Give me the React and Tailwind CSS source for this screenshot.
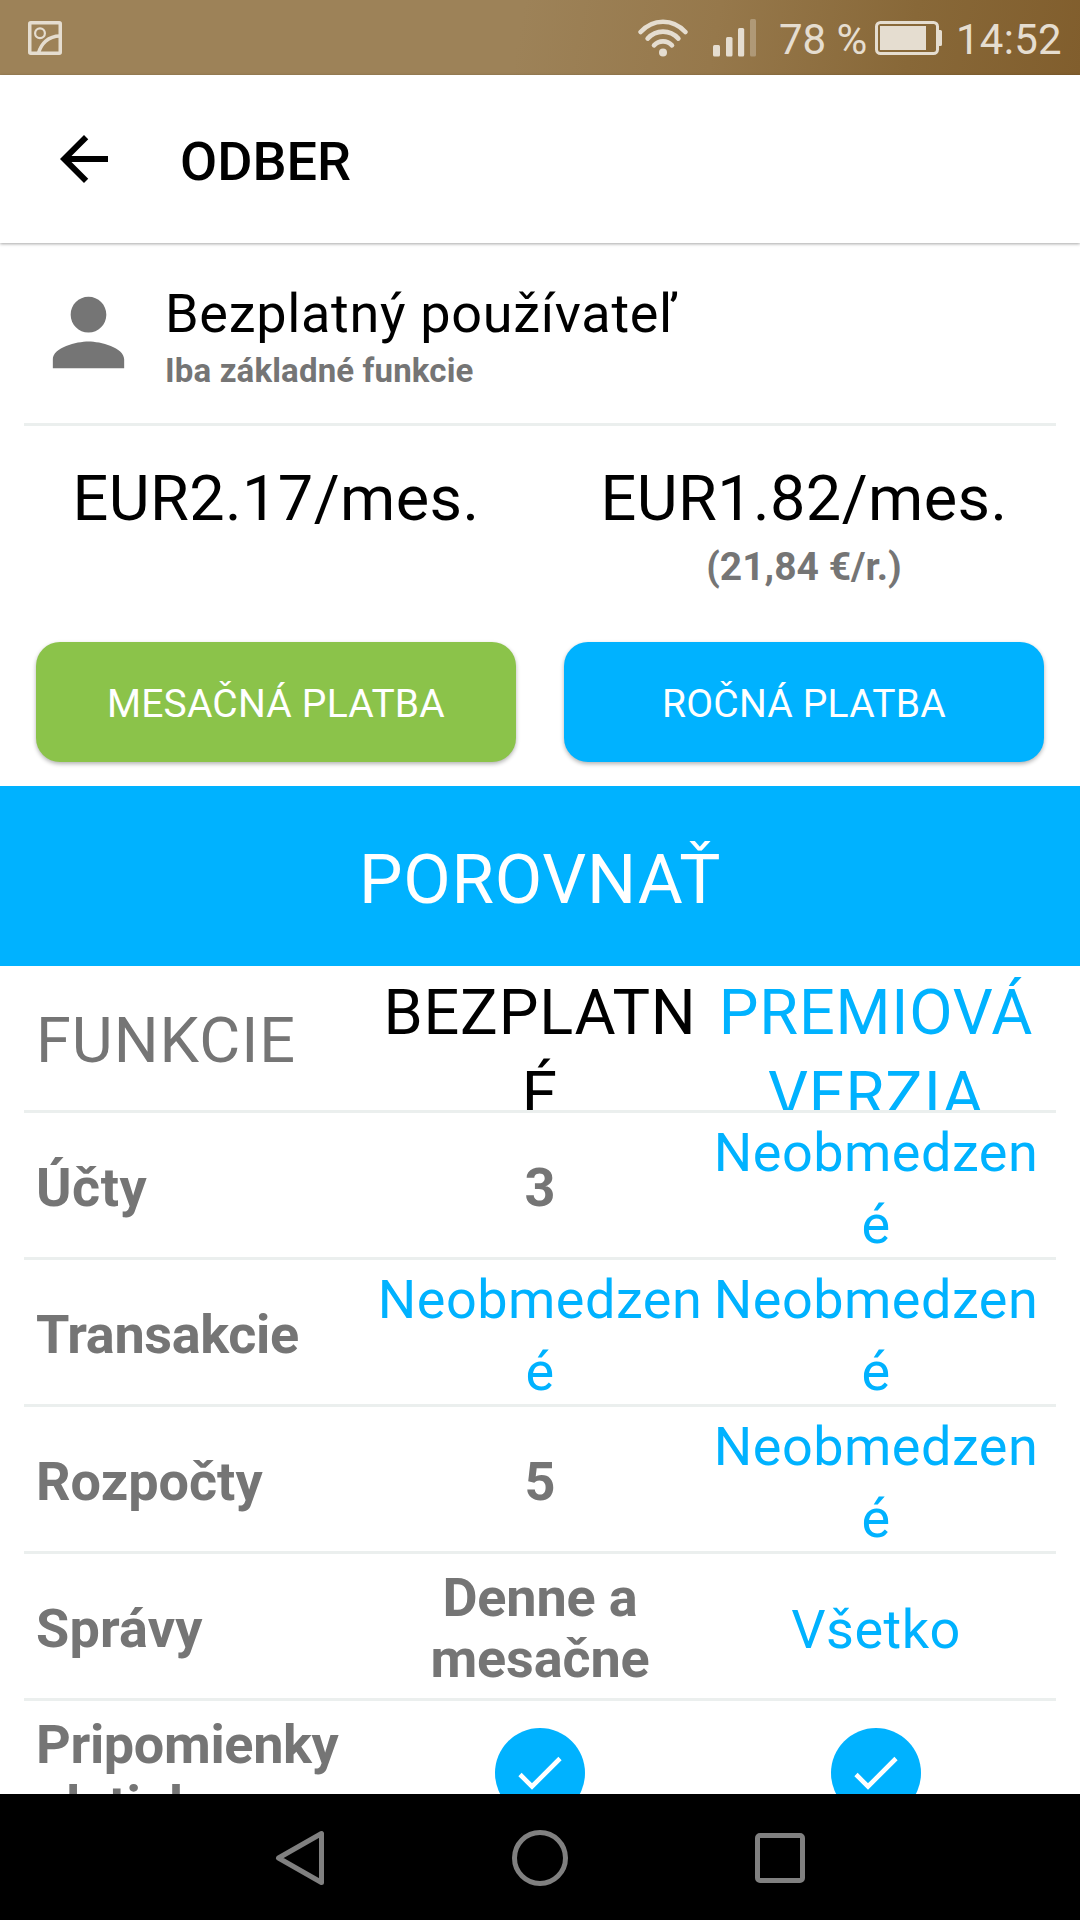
import React from 'react';

const rows = [
  { label: 'Účty', free: '3', premium: 'Neobmedzené', tracking: 'tracking-[0.5px]' },
  { label: 'Transakcie', free: 'Neobmedzené', freeBlue: true, premium: 'Neobmedzené', tracking: 'tracking-[-0.35px]' },
  { label: 'Rozpočty', free: '5', premium: 'Neobmedzené' },
  { label: 'Správy', free: 'Denne a mesačne', premium: 'Všetko', tracking: 'tracking-[0.2px]' },
  { label: 'Pripomienky platieb', free: true, premium: true, tracking: 'tracking-[-0.35px]' },
];

function StatusBar() {
  return (
    <div className="h-[75px] flex-none flex items-center pl-7 pr-[18px] bg-[linear-gradient(100deg,#9d8258_0%,#9d8258_48%,#96784b_66%,#886838_84%,#815e2d_100%)] text-[#e5ddd0]">
      <svg width="34" height="34" viewBox="0 0 34 34" fill="none" stroke="currentColor" className="flex-none">
        <rect x="1.75" y="1.75" width="30.5" height="30.5" rx="1" strokeWidth="3.5" />
        <circle cx="12" cy="12.3" r="4.9" strokeWidth="2.2" />
        <path d="M10.5 32C13 23 20 15 32 15" strokeWidth="3.4" />
      </svg>
      <div className="ml-auto flex items-center">
        {/* Wifi */}
        <svg width="50" height="38" viewBox="0 0 50 38" fill="none" stroke="currentColor" strokeWidth="4.6" strokeLinecap="round">
          <path d="M2.6 13C15 -.7 35 -.7 47.4 13" />
          <path d="M9.6 19.6C18 10.3 32 10.3 40.4 19.6" />
          <path d="M16 26.3C21 21 29 21 34 26.3" />
          <circle cx="25" cy="33.5" r="4" fill="currentColor" stroke="none" />
        </svg>
        {/* Signal */}
        <svg width="43" height="38" viewBox="0 0 43 38" fill="currentColor" className="ml-[25px]">
          <rect x="0" y="26" width="7" height="11.5" rx="1.5" />
          <rect x="13" y="18" width="6.5" height="19.5" rx="1.5" />
          <rect x="25" y="9" width="6.2" height="28.5" rx="1.5" />
          <rect x="37" y="0" width="6" height="37.5" rx="1.5" opacity=".35" />
        </svg>
        <span className="w-[95px] pl-[23px] pt-1 text-[42px] leading-[48px] whitespace-nowrap">78 %</span>
        {/* Battery */}
        <svg width="67" height="34" viewBox="0 0 67 34" className="ml-6">
          <rect x="1.5" y="1.5" width="61" height="31" rx="4" fill="none" stroke="currentColor" strokeWidth="3" />
          <rect x="5" y="5" width="46" height="24" fill="currentColor" />
          <path d="M63 9h2.500a1.500 1.500 0 0 1 1.500 1.500v13a1.500 1.500 0 0 1-1.500 1.500H63z" fill="currentColor" />
        </svg>
        <span className="ml-[14px] pt-1 text-[42px] leading-[48px] tracking-[0.3px]">14:52</span>
      </div>
    </div>
  );
}

function CheckBadge() {
  return (
    <svg width="90" height="90" viewBox="0 0 90 90" fill="none">
      <circle cx="45" cy="45" r="45" fill="#00b2ff" />
      <path d="M25 46.5L37 58.5L65 30.5" stroke="#fff" strokeWidth="4.6" />
    </svg>
  );
}

function Cell({ value, blue }) {
  return (
    <div className="w-[336px] h-[144px] flex items-center justify-center">
      {value === true ? (
        <CheckBadge />
      ) : (
        <span className={`w-full text-center text-[54px] wrap-break-word ${blue ? 'text-[#00b2ff] leading-[72px] pt-[7px] tracking-[0.5px]' : 'text-[#757575] font-bold leading-[61px] pt-1 tracking-[-0.15px]'}`}>
          {value}
        </span>
      )}
    </div>
  );
}

function PriceOption({ price, note, label, color }) {
  return (
    <div className="w-[504px] flex flex-col items-center">
      <div className="text-[63px] leading-[74px] tracking-[0.4px] text-black">{price}</div>
      <div className="h-[61px] pt-px text-[39px] leading-[60px] font-bold text-[#757575]">{note}</div>
      <button className={`mt-[45px] w-[480px] h-[120px] pt-1 rounded-[24px] text-[39px] tracking-[0.2px] text-white shadow-[0_2px_4px_rgba(0,0,0,0.3)] ${color}`}>
        {label}
      </button>
    </div>
  );
}

export default function App() {
  return (
    <div className="w-[1080px] h-[1920px] flex flex-col overflow-hidden bg-white text-black font-[Roboto,sans-serif]">
      <StatusBar />

      {/* App bar */}
      <header className="h-[168px] flex-none flex items-center pl-12 shadow-[0_1px_3px_rgba(0,0,0,0.35)]">
        <svg width="72" height="72" viewBox="0 0 24 24">
          <path d="M20 11H7.830l5.590-5.590L12 4l-8 8 8 8 1.410-1.410L7.830 13H20v-2z" />
        </svg>
        <h1 className="ml-[60px] pt-[5px] text-[54px] leading-[63px] font-medium">ODBER</h1>
      </header>

      {/* Current plan */}
      <section className="h-[183px] flex-none mx-6 pl-[11px] flex border-b-[3px] border-[#ebefee]">
        <svg width="107" height="107" viewBox="0 0 24 24" fill="#757575" className="mt-9">
          <path d="M12 12c2.210 0 4-1.790 4-4s-1.790-4-4-4-4 1.790-4 4 1.790 4 4 4zm0 2c-2.670 0-8 1.340-8 4v2h16v-2c0-2.660-5.330-4-8-4z" />
        </svg>
        <div className="ml-[23px] pt-[39px]">
          <div className="text-[54px] leading-[63px] tracking-[0.7px]">Bezplatný používateľ</div>
          <div className="mt-[6px] text-[33px] leading-[39px] tracking-[0.15px] font-bold text-[#757575]">Iba základné funkcie</div>
        </div>
      </section>

      {/* Prices */}
      <section className="h-[360px] flex-none px-6 pt-[36px] flex gap-6">
        <PriceOption price="EUR2.17/mes." label="MESAČNÁ PLATBA" color="bg-[#8bc34a]" />
        <PriceOption price="EUR1.82/mes." note="(21,84 €/r.)" label="ROČNÁ PLATBA" color="bg-[#00b2ff]" />
      </section>

      <div className="h-[180px] flex-none pt-2 flex items-center justify-center bg-[#00b2ff] text-white text-[69px] tracking-[0.8px]">POROVNAŤ</div>

      {/* Comparison table */}
      <section className="flex-1 min-h-0 overflow-hidden px-6">
        <div className="h-[147px] px-3 flex overflow-hidden border-b-[3px] border-[#ebefee] text-[63px] leading-[82px] tracking-[0.8px]">
          <div className="w-[336px] pt-[34px] text-[#757575] tracking-[1px]">FUNKCIE</div>
          <div className="w-[336px] pt-1.5 text-center wrap-break-word">BEZPLATNÉ</div>
          <div className="w-[336px] pt-1.5 text-center text-[#00b2ff]">PREMIOVÁ VERZIA</div>
        </div>
        {rows.map(r => (
          <div key={r.label} className="h-[147px] px-3 flex border-b-[3px] border-[#ebefee]">
            <div className={`w-[336px] h-[144px] pt-1 flex items-center text-[54px] leading-[61px] font-bold text-[#757575] ${r.tracking || ''}`}>{r.label}</div>
            <Cell value={r.free} blue={r.freeBlue} />
            <Cell value={r.premium} blue />
          </div>
        ))}
      </section>

      {/* Navigation bar */}
      <nav className="h-[126px] flex-none flex items-center justify-center gap-[187px] pt-0.5 bg-black">
        <svg width="50" height="56" viewBox="0 0 50 56" fill="none" stroke="#808080" strokeWidth="5" strokeLinejoin="round">
          <path d="M46.5 3.5V52.5L3.5 28z" />
        </svg>
        <svg width="56" height="56" viewBox="0 0 56 56" fill="none" stroke="#808080" strokeWidth="5">
          <circle cx="28" cy="28" r="25.5" />
        </svg>
        <svg width="50" height="50" viewBox="0 0 50 50" fill="none" stroke="#808080" strokeWidth="5">
          <rect x="2.5" y="2.5" width="45" height="45" rx="2.5" />
        </svg>
      </nav>
    </div>
  );
}
